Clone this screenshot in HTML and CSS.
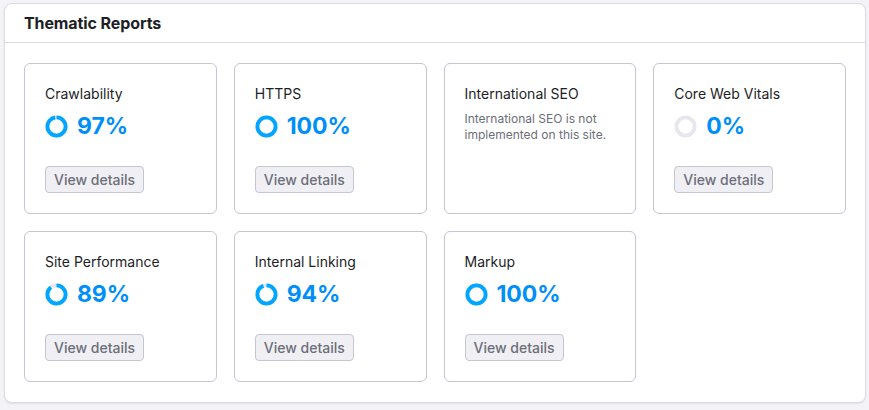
FILE: index.html
```html
<!DOCTYPE html>
<html lang="en">
<head>
    <meta charset="UTF-8">
    <meta name="viewport" content="width=device-width, initial-scale=1.0">
    <title>Thematic Reports</title>
    <link rel="stylesheet" href="styles.css">
</head>
<body>
    <div class="panel">
        <div class="panel-header">
            <h2>Thematic Reports</h2>
        </div>

        <div class="reports">
            <div class="report">
                <h3>Crawlability</h3>
                <div class="score">
                    <svg class="donut" viewBox="0 0 24 24"><circle class="track" cx="12" cy="12" r="9.5"/><circle class="fill" cx="12" cy="12" r="9.5" stroke-dasharray="57.9 59.7"/></svg>
                    <span>97%</span>
                </div>
                <button class="btn-details">View details</button>
            </div>
            <div class="report">
                <h3>HTTPS</h3>
                <div class="score">
                    <svg class="donut" viewBox="0 0 24 24"><circle class="track" cx="12" cy="12" r="9.5"/><circle class="fill" cx="12" cy="12" r="9.5" stroke-dasharray="59.7 59.7"/></svg>
                    <span>100%</span>
                </div>
                <button class="btn-details">View details</button>
            </div>
            <div class="report">
                <h3>International SEO</h3>
                <p class="note">International SEO is not implemented on this site.</p>
            </div>
            <div class="report">
                <h3>Core Web Vitals</h3>
                <div class="score">
                    <svg class="donut" viewBox="0 0 24 24"><circle class="track" cx="12" cy="12" r="9.5"/></svg>
                    <span>0%</span>
                </div>
                <button class="btn-details">View details</button>
            </div>
            <div class="report">
                <h3>Site Performance</h3>
                <div class="score">
                    <svg class="donut" viewBox="0 0 24 24"><circle class="track" cx="12" cy="12" r="9.5"/><circle class="fill" cx="12" cy="12" r="9.5" stroke-dasharray="53.1 59.7"/></svg>
                    <span>89%</span>
                </div>
                <button class="btn-details">View details</button>
            </div>
            <div class="report">
                <h3>Internal Linking</h3>
                <div class="score">
                    <svg class="donut" viewBox="0 0 24 24"><circle class="track" cx="12" cy="12" r="9.5"/><circle class="fill" cx="12" cy="12" r="9.5" stroke-dasharray="56.1 59.7"/></svg>
                    <span>94%</span>
                </div>
                <button class="btn-details">View details</button>
            </div>
            <div class="report">
                <h3>Markup</h3>
                <div class="score">
                    <svg class="donut" viewBox="0 0 24 24"><circle class="track" cx="12" cy="12" r="9.5"/><circle class="fill" cx="12" cy="12" r="9.5" stroke-dasharray="59.7 59.7"/></svg>
                    <span>100%</span>
                </div>
                <button class="btn-details">View details</button>
            </div>
        </div>
    </div>
</body>
</html>
```

FILE: styles.css
```css
body {
    font-family: Inter, "Noto Sans", sans-serif;
    background-color: #f4f4f8;
    margin: 0;
    padding: 3px 3px 3px 4px;
    color: #1d1e26;
}

.panel {
    background-color: #fff;
    border: 1px solid #dcdde3;
    border-radius: 8px;
    box-shadow: 0 1px 2px rgba(30, 35, 60, 0.1);
}

.panel-header {
    height: 38px;
    display: flex;
    align-items: center;
    padding: 0 19px;
    border-bottom: 1px solid #dcdde3;
}

.panel-header h2 {
    margin: 0;
    font-size: 16px;
    font-weight: 700;
    letter-spacing: -0.1px;
}

.reports {
    display: grid;
    grid-template-columns: repeat(4, 1fr);
    gap: 17px;
    padding: 20px 19px 20px;
}

.report {
    height: 151px;
    box-sizing: border-box;
    border: 1px solid #c4c6d1;
    border-radius: 6px;
    padding: 20px;
}

.report h3 {
    margin: 0;
    font-size: 14px;
    font-weight: 400;
    line-height: 20px;
}

.score {
    display: flex;
    align-items: center;
    gap: 9px;
    height: 28px;
    margin-top: 8px;
}

.score span {
    font-size: 23px;
    font-weight: 700;
    color: #008ff8;
    letter-spacing: -0.1px;
}

.donut {
    width: 23px;
    height: 23px;
    transform: rotate(-90deg);
}

.donut circle {
    fill: none;
    stroke-width: 4;
}

.donut .track {
    stroke: #e6e7ee;
}

.donut .fill {
    stroke: #00a6ff;
}

.btn-details {
    margin-top: 26px;
    height: 27px;
    padding: 0 8px;
    font-family: inherit;
    font-size: 14px;
    font-weight: 500;
    color: #6c6e79;
    background-color: #f0f0f4;
    border: 1px solid #c4c6d1;
    border-radius: 4px;
}

.note {
    margin: 7px 0 0;
    font-size: 12px;
    line-height: 16px;
    color: #6c6e79;
}
```
